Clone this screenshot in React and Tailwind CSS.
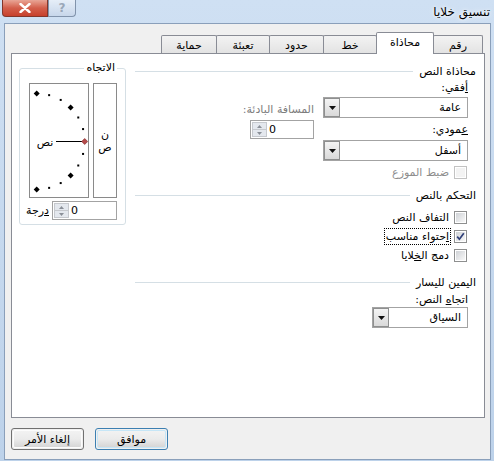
import React from "react";

const Check = ({ checked, disabled }) => (
  <div className={`w-[13px] h-[13px] flex-none border bg-white p-[1px] ${disabled ? "border-[#c2c2c2]" : "border-[#8e8f8f]"}`}>
    <div className={`w-full h-full flex items-center justify-center ${disabled ? "bg-[#f3f3f3]" : "bg-gradient-to-br from-[#cfd2d6] to-[#f8f8f8]"}`}>
      {checked && (
        <svg width="9" height="9" viewBox="0 0 9 9">
          <path d="M1.2 4.6 L3.4 7.2 L7.8 1.3" fill="none" stroke="#2f3f78" strokeWidth="1.7" />
        </svg>
      )}
    </div>
  </div>
);

const DropBtn = () => (
  <div className="w-[16px] h-[19px] flex-none border border-[#8e8f8f] bg-gradient-to-b from-[#f4f4f4] to-[#d9d9d9] flex items-center justify-center">
    <svg width="7" height="4" viewBox="0 0 7 4">
      <path d="M0 0 H7 L3.5 4 Z" fill="#111" />
    </svg>
  </div>
);

const Combo = ({ text, w }) => (
  <div className={`${w} h-[21px] border border-[#a3a3a3] bg-white flex flex-row items-center`}>
    <span className="flex-1 pr-[6px] whitespace-nowrap">{text}</span>
    <DropBtn />
  </div>
);

const Spinner = ({ w }) => (
  <div dir="ltr" className={`${w} h-[19px] border border-[#a3a3a3] bg-white flex flex-row items-center pl-[1px]`}>
    <div className="w-[15px] h-[15px] border border-[#c6c9ce] bg-[#e4e8ee] flex flex-col">
      <div className="flex-1 flex items-center justify-center border-b border-[#c6c9ce]">
        <svg width="5" height="3" viewBox="0 0 5 3"><path d="M0 3 H5 L2.5 0 Z" fill="#8a8f98" /></svg>
      </div>
      <div className="flex-1 flex items-center justify-center">
        <svg width="5" height="3" viewBox="0 0 5 3"><path d="M0 0 H5 L2.5 3 Z" fill="#8a8f98" /></svg>
      </div>
    </div>
    <span className="ml-[2px]">0</span>
  </div>
);

const Header = ({ text }) => (
  <div className="h-[14px] flex flex-row items-center">
    <span className="whitespace-nowrap">{text}</span>
    <div className="flex-1 h-px bg-[#d5dfe5] mr-[6px]" />
  </div>
);

const CheckRow = ({ children, checked, disabled, focused, h }) => (
  <div className={`${h} flex flex-row items-center mr-[9px]`}>
    <Check checked={checked} disabled={disabled} />
    <span
      className={`mr-[3px] whitespace-nowrap px-[1px] py-[2px] ${disabled ? "text-[#8d8d8d]" : ""} ${focused ? "border border-dotted border-black" : "border border-transparent"}`}
    >
      {children}
    </span>
  </div>
);

const Tab = ({ text, w, selected, first }) => (
  <div
    className={`${w} flex-none flex items-center justify-center border-t border-l border-r border-[#898c95] rounded-t-[2px] ${first ? "" : "-mr-px"} ${
      selected ? "h-[22px] -mb-px bg-white z-10 relative pb-[2px]" : "h-[18px] bg-gradient-to-b from-[#f3f3f3] to-[#e3e3e3] pt-[1px]"
    }`}
  >
    {text}
  </div>
);

const Arc = () => {
  const cx = 6.7;
  const cy = 57.5;
  const r = 48;
  const pts = [];
  for (let a = -90; a <= 90; a += 15) {
    const rad = (a * Math.PI) / 180;
    pts.push({ a, x: cx + r * Math.cos(rad), y: cy + r * Math.sin(rad) });
  }
  return (
    <svg width="58" height="113" viewBox="0 0 58 113">
      {pts.map((p) => {
        if (p.a === 0) return null;
        if (p.a % 45 === 0) {
          return (
            <path key={p.a} d={`M${p.x} ${p.y - 3} L${p.x + 3} ${p.y} L${p.x} ${p.y + 3} L${p.x - 3} ${p.y} Z`} fill="#000" />
          );
        }
        return <rect key={p.a} x={p.x - 1} y={p.y - 1} width="2" height="2" fill="#000" />;
      })}
      <line x1="26" y1={cy} x2="52" y2={cy} stroke="#000" strokeWidth="1" />
      <path d={`M${cx + r} ${cy - 3} L${cx + r + 3} ${cy} L${cx + r} ${cy + 3} L${cx + r - 3} ${cy} Z`} fill="#b54a4a" stroke="#7a2020" strokeWidth="0.6" />
      <text x="15" y={cy + 4} textAnchor="middle" fontSize="11" fontFamily="DejaVu Sans, sans-serif" fill="#000">نص</text>
    </svg>
  );
};

export default function App() {
  return (
    <div
      dir="rtl"
      className="w-[494px] h-[461px] overflow-hidden bg-gradient-to-b from-[#cfe0f3] to-[#bdd2ea] flex flex-col font-['DejaVu_Sans',sans-serif] text-[11px] leading-none text-black"
    >
      {/* Title bar */}
      <div className="h-[23px] flex-none flex flex-row items-start justify-between">
        <div className="mr-[4px] mt-[6px] text-[12px] whitespace-nowrap [text-shadow:0_0_6px_#fff,0_0_3px_#fff]">تنسيق خلايا</div>
        <div className="flex flex-row ml-[3px]">
          <div className="w-[28px] h-[17px] border border-[#8193ab] border-t-0 rounded-br-[4px] bg-gradient-to-b from-[#e6eef8] to-[#c7d6ea] flex items-center justify-center text-[#9aa7b8] text-[12px] font-bold">
            ?
          </div>
          <div className="w-[46px] h-[17px] border border-[#83362b] border-t-0 rounded-bl-[4px] bg-gradient-to-b from-[#e8a596] via-[#d35e4b] to-[#c7402c] flex items-center justify-center -ml-px">
            <svg width="12" height="10" viewBox="0 0 12 10">
              <path d="M1.5 1 L10.5 9 M10.5 1 L1.5 9" stroke="#fff" strokeWidth="2.4" strokeLinecap="round" />
            </svg>
          </div>
        </div>
      </div>

      {/* Client area */}
      <div className="mr-[3px] w-[487px] h-[437px] flex-none border border-[#8a9fba] bg-[#f0f0f0] flex flex-col pt-[8px] pr-[5px] pl-[6px]">
        {/* Tabs */}
        <div className="h-[21px] flex flex-row items-end pr-[2px]">
          <Tab text="رقم" w="w-[50px]" first />
          <Tab text="محاذاة" w="w-[58px]" selected />
          <Tab text="خط" w="w-[54px]" />
          <Tab text="حدود" w="w-[55px]" />
          <Tab text="تعبئة" w="w-[54px]" />
          <Tab text="حماية" w="w-[56px]" />
        </div>

        {/* Pane */}
        <div className="h-[365px] border border-[#898c95] bg-white flex flex-row items-start pr-[8px] pl-[7px]">
          {/* Right column */}
          <div className="w-[341px] flex flex-col pt-[10px]">
            <Header text="محاذاة النص" />

            <div className="flex flex-row items-start mt-[4px] mr-[8px]">
              <div className="w-[145px] flex flex-col">
                <div className="h-[12px]">
                  <span className="underline">أ</span>فقي:
                </div>
                <div className="mt-[3px]">
                  <Combo text="عامة" w="w-[145px]" />
                </div>
                <div className="h-[12px] mt-[6px]">
                  <span className="underline">ع</span>مودي:
                </div>
                <div className="mt-[4px]">
                  <Combo text="أسفل" w="w-[145px]" />
                </div>
              </div>
              <div className="mr-[9px] flex flex-col items-start pt-[22px]">
                <div className="h-[12px] text-[#7d7d7d] whitespace-nowrap">المسافة البادئة:</div>
                <div className="mt-[4px]">
                  <Spinner w="w-[64px]" />
                </div>
              </div>
            </div>

            <div className="mt-[2px]">
              <CheckRow h="h-[19px]" disabled>ضبط الموزع</CheckRow>
            </div>

            <div className="mt-[6px]">
              <Header text="التحكم بالنص" />
            </div>
            <div className="mt-[5px]">
              <CheckRow h="h-[20px]">التفاف النص</CheckRow>
              <CheckRow h="h-[19px]" checked focused>
                <span className="underline">ا</span>حتواء مناسب
              </CheckRow>
              <CheckRow h="h-[19px]">
                دمج ال<span className="underline">خ</span>لايا
              </CheckRow>
            </div>

            <div className="mt-[10px]">
              <Header text="اليمين لليسار" />
            </div>
            <div className="h-[12px] mt-[5px] mr-[8px]">
              اتجا<span className="underline">ه</span> النص:
            </div>
            <div className="mt-[1px] mr-[8px]">
              <Combo text="السياق" w="w-[96px]" />
            </div>
          </div>

          {/* Orientation group */}
          <div className="w-[107px] mr-[9px] mt-[14px] border border-[#d5dfe5] rounded-[3px] flex flex-col pb-[4px]">
            <div className="self-start mr-[8px] -mt-[7px] px-[2px] bg-white h-[13px] whitespace-nowrap">الاتجاه</div>
            <div className="flex flex-row mt-[8px] mr-[8px] gap-[4px]">
              <div className="w-[24px] h-[115px] border border-[#8a8a8a] flex flex-col items-center justify-center gap-[2px]">
                <span>ن</span>
                <span>ص</span>
              </div>
              <div className="w-[60px] h-[115px] border border-[#8a8a8a]">
                <Arc />
              </div>
            </div>
            <div className="flex flex-row items-center mt-[3px] mr-[8px]">
              <Spinner w="w-[65px]" />
              <span className="mr-[3px] whitespace-nowrap">
                <span className="underline">د</span>رجة
              </span>
            </div>
          </div>
        </div>

        {/* Buttons */}
        <div className="flex flex-row justify-end mt-[10px]">
          <div className="w-[73px] h-[22px] rounded-[3px] border border-[#3c7fb1] p-[1px] bg-[#f0f0f0]">
            <div className="w-full h-full rounded-[2px] border border-[#c6e6f7] bg-gradient-to-b from-[#f2f2f2] via-[#ebebeb] to-[#d6d6d6] flex items-center justify-center">
              موافق
            </div>
          </div>
          <div className="w-[73px] h-[22px] mr-[11px] rounded-[3px] border border-[#707070] p-[1px]">
            <div className="w-full h-full rounded-[2px] border border-[#fcfcfc] bg-gradient-to-b from-[#f2f2f2] via-[#ebebeb] to-[#d6d6d6] flex items-center justify-center">
              إلغاء الأمر
            </div>
          </div>
        </div>
      </div>
    </div>
  );
}
